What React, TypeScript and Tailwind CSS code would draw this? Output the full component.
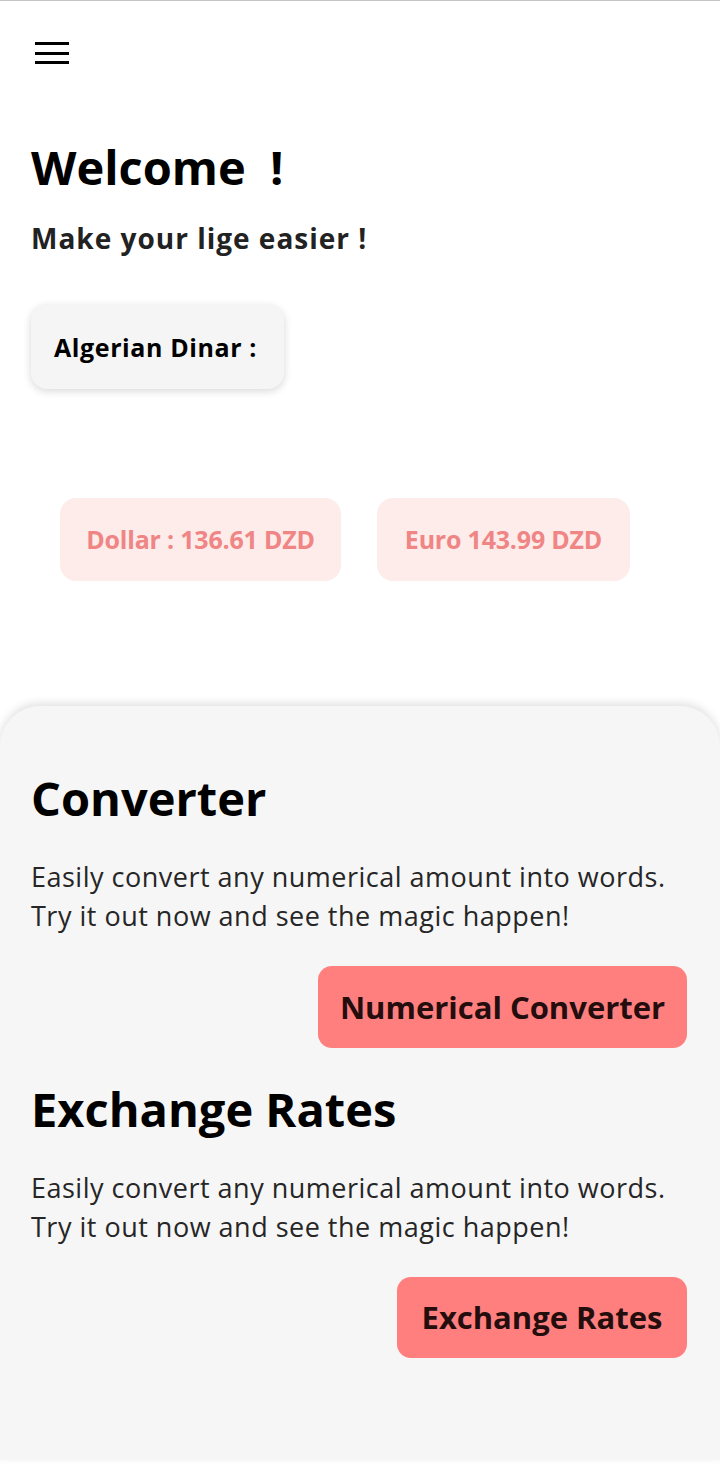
import { useState } from 'react'

const font = { fontFamily: '"Open Sans", "Noto Sans", sans-serif' }

const rates = [
  { label: 'Dollar : 136.61 DZD', width: 'w-[281px]' },
  { label: 'Euro 143.99 DZD', width: 'w-[253px]' },
]

const sections = [
  {
    title: 'Converter',
    action: 'Numerical Converter',
    button: 'w-[369px] h-[82px]',
    gap: 'mt-[69px]',
  },
  {
    title: 'Exchange Rates',
    action: 'Exchange Rates',
    button: 'w-[290px] h-[81px]',
    gap: 'mt-[38px]',
  },
]

function Hamburger({ onClick }: { onClick: () => void }) {
  return (
    <button onClick={onClick} className="ml-[35px] mt-[41px] flex w-[34px] flex-col gap-[6.5px]">
      <span className="block h-[3px] w-full bg-black" />
      <span className="block h-[3px] w-full bg-black" />
      <span className="block h-[3px] w-full bg-black" />
    </button>
  )
}

export default function App() {
  const [menuOpen, setMenuOpen] = useState(false)

  return (
    <div style={font} className="flex min-h-[1466px] w-[720px] flex-col bg-white">
      <div className="h-px w-full bg-[#c4c4c4]" />

      <Hamburger onClick={() => setMenuOpen(!menuOpen)} />

      {/* Header */}
      <div className="px-[31px]">
        <h1 className="mt-[80px] whitespace-pre text-[47px] font-bold leading-none text-black">
          Welcome <span className="ml-[12px]">!</span>
        </h1>
        <p className="mt-[33px] text-[28px] font-bold leading-none tracking-[1px] text-[#222]">
          Make your lige easier !
        </p>

        <div className="mt-[53px] flex h-[84px] w-[253px] items-center rounded-[16px] bg-[#f5f5f5] px-[23px] shadow-[0_2px_9px_rgba(0,0,0,0.16)]">
          <span className="text-[25px] font-bold leading-none tracking-[0.6px] text-black">
            Algerian Dinar :
          </span>
        </div>
      </div>

      {/* Rates */}
      <div className="ml-[60px] mt-[109px] flex gap-[36px]">
        {rates.map((r) => (
          <div
            key={r.label}
            className={`${r.width} flex h-[83px] items-center justify-center rounded-[16px] bg-[#fdecea]`}
          >
            <span className="text-[25px] font-bold leading-none tracking-[-0.2px] text-[#f08585]">
              {r.label}
            </span>
          </div>
        ))}
      </div>

      {/* Bottom sheet */}
      <div className="mt-[125px] h-[754px] w-full rounded-t-[40px] bg-[#f6f6f6] px-[31px] pr-[33px] shadow-[0_-3px_9px_rgba(0,0,0,0.12)]">
        {sections.map((s) => (
          <div key={s.title}>
            <h2 className={`${s.gap} text-[47px] font-bold leading-none text-black`}>{s.title}</h2>
            <p className="mt-[35px] text-[27px] font-normal leading-[39px] tracking-[0.5px] text-[#262626]">
              Easily convert any numerical amount into words.
              <br />
              Try it out now and see the magic happen!
            </p>
            <div className="mt-[31px] flex justify-end">
              <button
                className={`${s.button} flex items-center justify-center rounded-[14px] bg-[#ff7f7f]`}
              >
                <span className="text-[31px] font-bold leading-none text-[#240d0d]">{s.action}</span>
              </button>
            </div>
          </div>
        ))}
      </div>
    </div>
  )
}
